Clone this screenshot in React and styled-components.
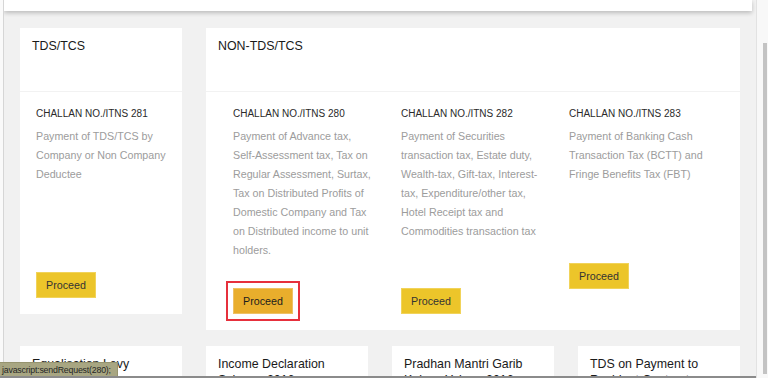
import React from "react";
import styled, { createGlobalStyle } from "styled-components";

const GlobalStyle = createGlobalStyle`
  html, body {
    margin: 0;
    padding: 0;
    height: 100%;
    overflow: hidden;
  }
  body {
    font-family: "Liberation Sans", Arial, sans-serif;
    background: #ffffff;
  }
  #root {
    height: 100%;
  }
`;

const Page = styled.div`
  display: flex;
  height: 100vh;
`;

const Main = styled.div`
  flex: 1;
  min-width: 0;
  display: flex;
  border-bottom: 2px solid #8b8b8b;
  overflow: hidden;
`;

const LeftEdge = styled.div`
  width: 3px;
  flex-shrink: 0;
  background: #fafafa;
  border-right: 1px solid #d6d6d6;
`;

const Content = styled.div`
  flex: 1;
  min-width: 0;
  display: flex;
  flex-direction: column;
  background: #f1f1f1;
  overflow: hidden;
`;

const TopBar = styled.div`
  height: 11px;
  flex-shrink: 0;
  margin-right: 4px;
  background: #ffffff;
  box-shadow: 0 2px 4px rgba(0, 0, 0, 0.22);
  position: relative;
  z-index: 1;
`;

const CardGrid = styled.div`
  display: grid;
  grid-template-columns: repeat(4, 162px);
  column-gap: 24px;
  row-gap: 16px;
  align-items: start;
  padding: 17px 0 0 16px;
`;

const Card = styled.section`
  background: #ffffff;
  grid-column: ${(p) => (p.$span ? `span ${p.$span}` : "auto")};
`;

const CardHeader = styled.div`
  height: 64px;
  box-sizing: border-box;
  padding: 10px 12px 0;
  border-bottom: 1px solid #f2f2f2;
`;

const CardTitle = styled.h3`
  margin: 0;
  font-size: 12.4px;
  line-height: 16px;
  font-weight: normal;
  color: #1a1a1a;
`;

const SchemeCard = styled.section`
  background: #ffffff;
  padding: 10px 12px 12px;
  min-height: 80px;
`;

const CardBody = styled.div`
  display: grid;
  grid-template-columns: ${(p) => p.$cols};
  column-gap: 27px;
  padding: 15px ${(p) => p.$padRight}px 16px ${(p) => p.$padLeft}px;
`;

const Column = styled.div`
  display: flex;
  flex-direction: column;
  align-items: flex-start;
`;

const ChallanNo = styled.h4`
  margin: 0;
  font-size: 10px;
  line-height: 13px;
  font-weight: normal;
  color: #2a2a2a;
  text-transform: uppercase;
`;

const Desc = styled.p`
  margin: 7px 0 0;
  font-size: 10.7px;
  line-height: 19px;
  color: #9c9c9c;
`;

const ProceedButton = styled.button`
  margin-top: ${(p) => p.$gap}px;
  width: 60px;
  height: 26px;
  padding: 0;
  box-sizing: border-box;
  font-family: inherit;
  font-size: 10.7px;
  color: ${(p) => (p.$focused ? "#1c1c1c" : "#333333")};
  background: ${(p) => (p.$focused ? "#e9ae2c" : "#ecc52a")};
  border: 1px solid ${(p) => (p.$focused ? "#efc164" : "#f1d35a")};
  border-radius: 0;
  outline: ${(p) => (p.$focused ? "2px solid #e6303c" : "none")};
  outline-offset: 5px;
  cursor: pointer;
`;

const Scrollbar = styled.div`
  width: 12px;
  flex-shrink: 0;
  box-sizing: border-box;
  display: flex;
  padding: 43px 1px 4px 6px;
  border-left: 1px solid #e2e2e2;
  background: #f8f8f8;
`;

const Thumb = styled.div`
  flex: 1;
  background: #c3c3c3;
`;

const StatusBar = styled.div`
  position: fixed;
  left: 0;
  bottom: 2px;
  height: 14px;
  padding: 0 6px 0 2px;
  box-sizing: border-box;
  display: flex;
  align-items: center;
  background: #a8a682;
  border-top: 1px solid #96946f;
  border-right: 1px solid #96946f;
  font-size: 8.8px;
  letter-spacing: -0.2px;
  color: #262626;
  z-index: 5;
`;

const nonTds = [
  {
    no: 280,
    text:
      "Payment of Advance tax, Self-Assessment tax, Tax on Regular Assessment, Surtax, Tax on Distributed Profits of Domestic Company and Tax on Distributed income to unit holders.",
    gap: 28,
    focused: true,
  },
  {
    no: 282,
    text:
      "Payment of Securities transaction tax, Estate duty, Wealth-tax, Gift-tax, Interest-tax, Expenditure/other tax, Hotel Receipt tax and Commodities transaction tax",
    gap: 47,
  },
  {
    no: 283,
    text: "Payment of Banking Cash Transaction Tax (BCTT) and Fringe Benefits Tax (FBT)",
    gap: 79,
  },
];

const schemes = [
  "Equalisation Levy",
  "Income Declaration Scheme 2016",
  "Pradhan Mantri Garib Kalyan Yojana 2016",
  "TDS on Payment to Resident Contractors and Professionals",
];

export default function App() {
  return (
    <>
      <GlobalStyle />
      <Page>
        <Main>
          <LeftEdge />
          <Content>
            <TopBar />
            <CardGrid>
              <Card>
                <CardHeader>
                  <CardTitle>TDS/TCS</CardTitle>
                </CardHeader>
                <CardBody $cols="1fr" $padLeft={16} $padRight={16}>
                  <Column>
                    <ChallanNo>CHALLAN NO./ITNS 281</ChallanNo>
                    <Desc>Payment of TDS/TCS by Company or Non Company Deductee</Desc>
                    <ProceedButton $gap={88}>Proceed</ProceedButton>
                  </Column>
                </CardBody>
              </Card>
              <Card $span={3}>
                <CardHeader>
                  <CardTitle>NON-TDS/TCS</CardTitle>
                </CardHeader>
                <CardBody $cols="repeat(3, 141px)" $padLeft={27} $padRight={26}>
                  {nonTds.map((c) => (
                    <Column key={c.no}>
                      <ChallanNo>CHALLAN NO./ITNS {c.no}</ChallanNo>
                      <Desc>{c.text}</Desc>
                      <ProceedButton $gap={c.gap} $focused={c.focused}>
                        Proceed
                      </ProceedButton>
                    </Column>
                  ))}
                </CardBody>
              </Card>
              {schemes.map((s) => (
                <SchemeCard key={s}>
                  <CardTitle>{s}</CardTitle>
                </SchemeCard>
              ))}
            </CardGrid>
          </Content>
        </Main>
        <Scrollbar>
          <Thumb />
        </Scrollbar>
      </Page>
      <StatusBar>javascript:sendRequest(280);</StatusBar>
    </>
  );
}
